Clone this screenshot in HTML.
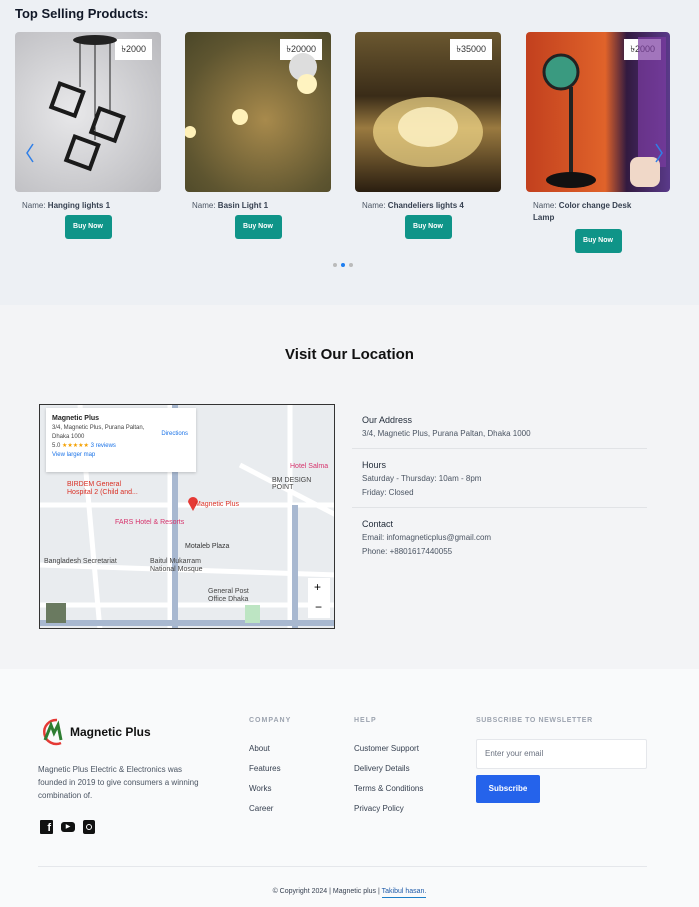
<!DOCTYPE html>
<html><head><meta charset="utf-8"><style>
*{margin:0;padding:0;box-sizing:border-box}
body{width:699px;height:907px;font-family:"Liberation Sans",sans-serif;background:#f9fafb;color:#1f2937;overflow:hidden}
.top{position:absolute;left:0;top:0;width:699px;height:305px;background:#edf0f4}
h2{position:absolute;left:15px;top:6px;font-size:13px;font-weight:bold;color:#111827}
.card{position:absolute;top:32px;width:146px}
.img{height:160px;border-radius:4px;position:relative;overflow:hidden}
.price{position:absolute;top:7px;right:9px;background:#fff;font-size:9px;padding:3px 6px;color:#333}
.name{font-size:8px;color:#4b5563;margin:8px 0 0 7px;line-height:12px}
.name b{color:#374151}
.btn{display:block;margin:3px auto 0;width:47px;height:24px;background:#0f9488;color:#fff;font-size:7px;font-weight:bold;text-align:center;line-height:24px;border-radius:3px}
.mid{position:absolute;left:0;top:305px;width:699px;height:364px;background:#f3f4f6}
.info{position:absolute;left:362px;width:285px;font-size:8px;color:#4b5563;line-height:14px}
.info .t{font-size:9px;color:#1f2937}
</style></head><body>
<div class="top">
<h2>Top Selling Products:</h2>
<div class="card" style="left:15px"><div class="img" style="background:radial-gradient(circle at 40% 50%,#e8e8ea,#b9b9bd)"><div class="price">৳2000</div>
<svg width="146" height="160" style="position:absolute;left:0;top:0"><ellipse cx="80" cy="8" rx="22" ry="5" fill="#222"/><g stroke="#1a1a1a" stroke-width="4" fill="none"><rect x="40" y="55" width="25" height="25" transform="rotate(20 52 67)"/><rect x="80" y="80" width="25" height="25" transform="rotate(20 92 92)"/><rect x="55" y="108" width="25" height="25" transform="rotate(20 67 120)"/></g><path d="M65 10V55M80 10V108M95 10V80" stroke="#222"/><path d="M18 112l-6 9 6 9" stroke="#2f7fe8" stroke-width="1.5" fill="none"/></svg></div>
<div class="name">Name: <b>Hanging lights 1</b></div><div class="btn">Buy Now</div></div>
<div class="card" style="left:185px"><div class="img" style="background:radial-gradient(circle at 55% 55%,#a88a4c,#5e5530 70%,#4a4628)"><div class="price">৳20000</div>
<svg width="146" height="160" style="position:absolute;left:0;top:0"><circle cx="118" cy="35" r="14" fill="#ddd"/><circle cx="122" cy="52" r="10" fill="#fff3c0"/><circle cx="55" cy="85" r="8" fill="#fff1b8"/><circle cx="5" cy="100" r="6" fill="#fff1b8"/></svg></div>
<div class="name">Name: <b>Basin Light 1</b></div><div class="btn">Buy Now</div></div>
<div class="card" style="left:355px"><div class="img" style="background:linear-gradient(#6b5830,#3a2c18 40%,#9a7a40 60%,#2a1e10)"><div class="price">৳35000</div>
<svg width="146" height="160" style="position:absolute;left:0;top:0"><ellipse cx="73" cy="100" rx="55" ry="35" fill="#f2d98a" opacity=".7"/><ellipse cx="73" cy="95" rx="30" ry="20" fill="#fff4c8" opacity=".8"/></svg></div>
<div class="name">Name: <b>Chandeliers lights 4</b></div><div class="btn">Buy Now</div></div>
<div class="card" style="left:526px;width:144px"><div class="img" style="background:linear-gradient(90deg,#c2401e,#e0632a 55%,#321a40 70%,#5a3a8a)"><div class="price">৳2000</div>
<svg width="144" height="160" style="position:absolute;left:0;top:0"><circle cx="35" cy="40" r="17" fill="#3a9a80" stroke="#222" stroke-width="3"/><rect x="43" y="55" width="4" height="90" fill="#222"/><ellipse cx="45" cy="148" rx="25" ry="8" fill="#111"/><rect x="112" y="5" width="28" height="130" fill="#7a3aa0" opacity=".7"/><rect x="104" y="125" width="30" height="30" rx="8" fill="#f0d8c8"/><path d="M130 112l6 9-6 9" stroke="#2f7fe8" stroke-width="1.5" fill="none"/></svg></div>
<div class="name">Name: <b>Color change Desk<br>Lamp</b></div><div class="btn" style="margin-top:5px">Buy Now</div></div>
<div style="position:absolute;top:261px;left:333px;line-height:4px"><span style="display:inline-block;width:4px;height:4px;border-radius:50%;background:#bbb;margin-right:4px"></span><span style="display:inline-block;width:4px;height:4px;border-radius:50%;background:#1e7ef0;margin-right:4px"></span><span style="display:inline-block;width:4px;height:4px;border-radius:50%;background:#bbb"></span></div>
</div>
<div class="mid">
<div style="position:absolute;top:41px;width:699px;text-align:center;font-size:15px;font-weight:bold;color:#111">Visit Our Location</div>
<div style="position:absolute;left:39px;top:99px;width:296px;height:225px;border:1px solid #333;background:#e9ecef;overflow:hidden">
<svg width="296" height="225" style="position:absolute"><g stroke="#fff" stroke-width="5" fill="none"><path d="M0 200H296M0 160L296 170M130 0V225M40 0L60 225M200 60L296 110M0 100H296M250 0V225"/></g><g stroke="#a8b8d0" stroke-width="6" fill="none"><path d="M135 0V225M0 218H296M255 100V225"/></g><rect x="205" y="200" width="15" height="18" fill="#bde5c3"/><path d="M148 97a5 5 0 1 1 10 0l-5 9z" fill="#e53935"/><rect x="268" y="173" width="22" height="40" fill="#fff"/><text x="274" y="186" font-size="12" font-family="Liberation Sans">+</text><text x="275" y="206" font-size="12" font-family="Liberation Sans">−</text><rect x="6" y="198" width="20" height="20" fill="#6a7a60"/></svg>
<div style="position:absolute;left:6px;top:3px;background:#fff;width:150px;height:64px;padding:6px;font-size:6px;color:#444;line-height:9px;box-shadow:0 1px 3px #0003"><b style="font-size:7px;color:#222">Magnetic Plus</b><br>3/4, Magnetic Plus, Purana Paltan,<br>Dhaka 1000<br>5.0 <span style="color:#f4a000">★★★★★</span> <span style="color:#1a73e8">3 reviews</span><br><span style="color:#1a73e8">View larger map</span><span style="position:absolute;right:8px;top:22px;color:#1a73e8">Directions</span></div>
<div style="position:absolute;left:155px;top:96px;font-size:7px;color:#d93025">Magnetic Plus</div>
<div style="position:absolute;left:250px;top:58px;font-size:7px;color:#d6336c">Hotel Salma</div>
<div style="position:absolute;left:27px;top:76px;font-size:7px;color:#d93025;line-height:8px">BIRDEM General<br>Hospital 2 (Child and...</div>
<div style="position:absolute;left:75px;top:114px;font-size:7px;color:#d6336c">FARS Hotel &amp; Resorts</div>
<div style="position:absolute;left:145px;top:138px;font-size:7px;color:#333">Motaleb Plaza</div>
<div style="position:absolute;left:4px;top:153px;font-size:7px;color:#444">Bangladesh Secretariat</div>
<div style="position:absolute;left:110px;top:153px;font-size:7px;color:#444;line-height:8px">Baitul Mukarram<br>National Mosque</div>
<div style="position:absolute;left:168px;top:183px;font-size:7px;color:#444;line-height:8px">General Post<br>Office Dhaka</div>
<div style="position:absolute;left:232px;top:72px;font-size:7px;color:#444">BM DESIGN POINT</div>
</div>
<div class="info" style="top:108px"><div class="t">Our Address</div>3/4, Magnetic Plus, Purana Paltan, Dhaka 1000</div>
<div style="position:absolute;left:352px;top:143px;width:295px;border-top:1px solid #e1e3e6"></div>
<div class="info" style="top:153px"><div class="t">Hours</div>Saturday - Thursday: 10am - 8pm<br>Friday: Closed</div>
<div style="position:absolute;left:352px;top:202px;width:295px;border-top:1px solid #e1e3e6"></div>
<div class="info" style="top:212px"><div class="t">Contact</div>Email: infomagneticplus@gmail.com<br>Phone: +8801617440055</div>
</div>
<div style="position:absolute;top:669px;left:0;width:699px;height:238px">
<svg width="26" height="30" style="position:absolute;left:39px;top:48px"><path d="M18 3A12 12 0 1 0 22 26" stroke="#e53935" stroke-width="2.5" fill="none"/><path d="M6 23L12 8 15 16 19 8 22 23" stroke="#2e7d32" stroke-width="3" fill="none"/></svg>
<div style="position:absolute;left:70px;top:56px;font-size:12px;font-weight:bold;color:#111">Magnetic Plus</div>
<div style="position:absolute;left:38px;top:94px;width:170px;font-size:8px;line-height:13px;color:#4b5563">Magnetic Plus Electric &amp; Electronics was founded in 2019 to give consumers a winning combination of.</div>
<div style="position:absolute;left:40px;top:151px;display:flex;gap:8px"><span style="width:13px;height:14px;background:#111;border-radius:1px;color:#fff;font-size:11px;font-weight:bold;text-align:right;padding-right:2px;line-height:16px">f</span><span style="width:14px;height:10px;margin-top:2px;background:#111;border-radius:3px;color:#fff;font-size:6px;text-align:center;line-height:10px">▶</span><span style="width:12px;height:14px;background:#111;border-radius:2px;position:relative"><span style="position:absolute;left:3px;top:4px;width:6px;height:6px;border:1.5px solid #fff;border-radius:50%"></span></span></div>
<div style="position:absolute;left:249px;top:48px;font-size:7px;font-weight:bold;color:#9ca3af;letter-spacing:1px">COMPANY</div>
<div style="position:absolute;left:249px;top:70px;font-size:8px;line-height:20px;color:#374151">About<br>Features<br>Works<br>Career</div>
<div style="position:absolute;left:354px;top:48px;font-size:7px;font-weight:bold;color:#9ca3af;letter-spacing:1px">HELP</div>
<div style="position:absolute;left:354px;top:70px;font-size:8px;line-height:20px;color:#374151">Customer Support<br>Delivery Details<br>Terms &amp; Conditions<br>Privacy Policy</div>
<div style="position:absolute;left:476px;top:48px;font-size:7px;font-weight:bold;color:#9ca3af;letter-spacing:.6px">SUBSCRIBE TO NEWSLETTER</div>
<div style="position:absolute;left:476px;top:70px;width:171px;height:30px;background:#fff;border:1px solid #e5e7eb;border-radius:2px;font-size:8px;color:#6b7280;padding:9px 8px">Enter your email</div>
<div style="position:absolute;left:476px;top:106px;width:64px;height:28px;background:#2563eb;border-radius:2px;color:#fff;font-size:8px;font-weight:bold;text-align:center;line-height:28px">Subscribe</div>
<div style="position:absolute;left:38px;top:197px;width:609px;border-top:1px solid #e5e7eb"></div>
<div style="position:absolute;top:219px;width:699px;text-align:center;font-size:7px;color:#374151">© Copyright 2024 | Magnetic plus | <span style="color:#1e5aa8;border-bottom:1px solid #1e7ec8;padding-bottom:2px">Takibul hasan.</span></div>
</div>
</body></html>
